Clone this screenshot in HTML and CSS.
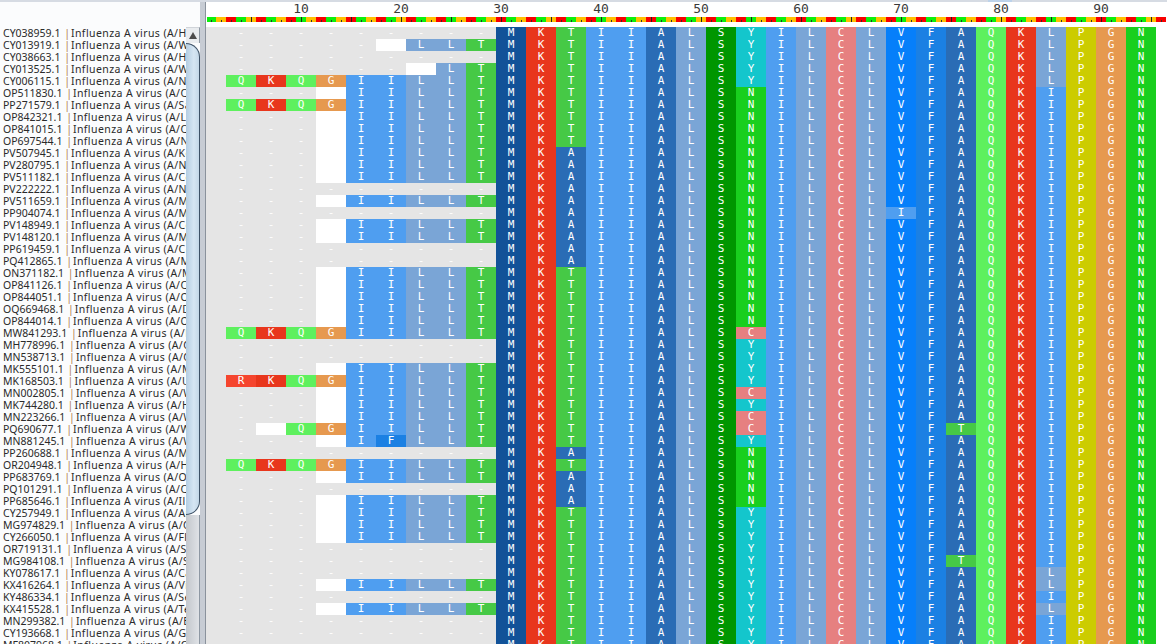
FILE: index.html

```html
<!DOCTYPE html>
<html lang="en">
<head>
  <meta charset="UTF-8">
  <title>Alignment viewer</title>
  <link rel="stylesheet" href="styles.css">
</head>
<body>
  <div class="top-sliver"></div>
  <div class="viewer">
    <!-- Sequence names -->
    <div class="names" id="names"></div>

    <div class="name-scrollbar">
      <div class="scroll-button"><span class="scroll-arrow"></span></div>
      <div class="scroll-thumb"></div>
      <div class="scroll-track"></div>
    </div>

    <div class="splitter"></div>

    <!-- Ruler and alignment -->
    <div class="alignment">
      <div class="ruler">
        <div class="ruler-labels" id="rulerLabels"></div>
        <div class="ruler-bar"></div>
      </div>
      <div class="rows" id="rows"></div>
    </div>
  </div>

  <script src="script.js"></script>
</body>
</html>
```

FILE: styles.css

```css
html,
body {
  margin: 0;
  height: 100%;
  overflow: hidden;
  background-color: white;
}

.top-sliver {
  position: absolute;
  top: 0;
  left: 988px;
  width: 24px;
  height: 2px;
  background-color: #bcd2ea;
}

.viewer {
  display: grid;
  grid-template-columns: 186px 14px 6px 1fr;
  height: 100%;
  box-sizing: border-box;
  border-top: 2px solid #d6dbe3;
}

/* Names */
.names {
  padding-top: 25px;
  overflow: hidden;
  background-color: #fbfcfd;
  color: #2a2a2a;
  font-family: "Noto Sans", sans-serif;
  font-size: 10.5px;
}

.name-row {
  display: flex;
  height: 12px;
  line-height: 12px;
  padding-left: 3px;
  white-space: pre;
}

.name-pipe {
  margin: 0 1px;
  color: #b0824f;
}

.name-desc {
  letter-spacing: 0.42px;
}

/* Scrollbar next to the names */
.name-scrollbar {
  display: flex;
  flex-direction: column;
  padding-top: 25px;
  background-color: #fbfcfd;
  overflow: hidden;
}

.scroll-button {
  display: flex;
  justify-content: center;
  flex: 0 0 16px;
  padding-top: 4px;
  box-sizing: border-box;
  background-color: #e9ecef;
  border-top: 1px solid #d0d4d9;
  border-right: 1px solid #8e98a3;
}

.scroll-arrow {
  width: 0;
  height: 0;
  border-left: 4px solid transparent;
  border-right: 4px solid transparent;
  border-bottom: 7px solid #4c4c4c;
}

.scroll-thumb {
  flex: 0 0 472px;
  box-sizing: border-box;
  border: 1.5px solid #3d5166;
  border-left: none;
  border-radius: 0 14px 14px 0;
  background: linear-gradient(90deg, #b4cde2, #d6e6f3 60%, #c4d8e8);
}

.scroll-track {
  flex: 1;
  background: linear-gradient(90deg, #c3c7cc, #dfe2e6);
  border-right: 1px solid #8e98a3;
}

.splitter {
  background-color: #c7ccd4;
  border-right: 1px solid #8a929c;
}

/* Ruler */
.alignment {
  overflow: hidden;
}

.ruler {
  height: 25px;
}

.ruler-labels {
  display: flex;
  height: 15px;
  padding-left: 45px;
  color: #3a3a3a;
  font-family: "DejaVu Sans Mono", monospace;
  font-size: 13px;
  line-height: 13px;
}

.ruler-label {
  flex: 0 0 100px;
  text-align: center;
}

.ruler-bar {
  height: 5px;
  margin-left: 1px;
  margin-right: 1px;
  background:
    repeating-linear-gradient(90deg, transparent 0 44px, #222 44px 45px, transparent 45px 50px) top / 100% 5px no-repeat,
    repeating-linear-gradient(90deg, transparent 0 4px, #333 4px 5px, transparent 5px 10px) bottom / 100% 2px no-repeat,
    repeating-linear-gradient(90deg, #0cf00c 0 9px, #ffc000 9px 19px, #f80000 19px 29px, #0cf00c 29px 30px);
}

/* Alignment cells */
.row {
  display: grid;
  grid-template-columns: 20px repeat(31, 30px);
  width: 950px;
  height: 12px;
  background-color: #e5e5e5;
  color: white;
  font-family: "DejaVu Sans Mono", monospace;
  font-size: 11px;
  line-height: 12px;
  text-align: center;
}

.cell {
  height: 12px;
}

.blank { background-color: white; }
.aa-M { background-color: #125298; }
.aa-K { background-color: #e8361c; }
.aa-T { background-color: #46c946; }
.aa-I { background-color: #4f9ef0; }
.aa-A { background-color: #2a6cb5; }
.aa-L { background-color: #7aa5d6; }
.aa-S { background-color: #009600; }
.aa-Y { background-color: #14c6cc; }
.aa-N { background-color: #19cf1e; }
.aa-C { background-color: #e68080; }
.aa-V { background-color: #067ffa; }
.aa-F { background-color: #1b80e3; }
.aa-Q { background-color: #5ef05e; }
.aa-P { background-color: #cccc00; }
.aa-G { background-color: #e6994f; }
.aa-R { background-color: #f5452e; }
```

FILE: script.js

```js
// id | strain prefix | sequence (space = empty cell)
const data = `CY038959.1|Ho|---------MKTIIALSYILCLVFAQKLPGN
CY013919.1|Wi|----- LLTMKTIIALSYILCLVFAQKLPGN
CY038663.1|Ho|---------MKTIIALSYILCLVFAQKLPGN
CY013525.1|Wi|------ LTMKTIIALSYILCLVFAQKLPGN
CY006115.1|Ne|QKQGIILLTMKTIIALSYILCLVFAQKLPGN
OP511830.1|Ca|--- IILLTMKTIIALSNILCLVFAQKIPGN
PP271579.1|Sa|QKQGIILLTMKTIIALSNILCLVFAQKIPGN
OP842321.1|Lo|--- IILLTMKTIIALSNILCLVFAQKIPGN
OP841015.1|Ca|--- IILLTMKTIIALSNILCLVFAQKIPGN
OP697544.1|Ne|--- IILLTMKTIIALSNILCLVFAQKIPGN
PV507945.1|Ke|--- IILLTMKAIIALSNILCLVFAQKIPGN
PV280795.1|Ne|--- IILLTMKAIIALSNILCLVFAQKIPGN
PV511182.1|Co|--- IILLTMKAIIALSNILCLVFAQKIPGN
PV222222.1|Ne|---------MKAIIALSNILCLVFAQKIPGN
PV511659.1|Mi|--- IILLTMKAIIALSNILCLVFAQKIPGN
PP904074.1|Mi|---------MKAIIALSNILCLIFAQKIPGN
PV148949.1|Co|--- IILLTMKAIIALSNILCLVFAQKIPGN
PV148120.1|Mi|--- IILLTMKAIIALSNILCLVFAQKIPGN
PP619459.1|Co|---------MKAIIALSNILCLVFAQKIPGN
PQ412865.1|Mi|---------MKAIIALSNILCLVFAQKIPGN
ON371182.1|Mi|--- IILLTMKTIIALSNILCLVFAQKIPGN
OP841126.1|Ca|--- IILLTMKTIIALSNILCLVFAQKIPGN
OP844051.1|Or|--- IILLTMKTIIALSNILCLVFAQKIPGN
OQ669468.1|De|--- IILLTMKTIIALSNILCLVFAQKIPGN
OP844014.1|Or|--- IILLTMKTIIALSNILCLVFAQKIPGN
MW841293.1|Ec|QKQGIILLTMKTIIALSCILCLVFAQKIPGN
MH778996.1|Ca|---------MKTIIALSYILCLVFAQKIPGN
MN538713.1|Ca|---------MKTIIALSYILCLVFAQKIPGN
MK555101.1|Mi|--- IILLTMKTIIALSYILCLVFAQKIPGN
MK168503.1|Ut|RKQGIILLTMKTIIALSYILCLVFAQKIPGN
MN002805.1|Wi|--- IILLTMKTIIALSCILCLVFAQKIPGN
MK744280.1|Ho|--- IILLTMKTIIALSYILCLVFAQKIPGN
MN223266.1|Wi|--- IILLTMKTIIALSCILCLVFAQKIPGN
PQ690677.1|Wi|- QGIILLTMKTIIALSCILCLVFTQKIPGN
MN881245.1|Wi|--- IFLLTMKTIIALSYILCLVFAQKIPGN
PP260688.1|Mi|---------MKAIIALSNILCLVFAQKIPGN
OR204948.1|Ho|QKQGIILLTMKTIIALSNILCLVFAQKIPGN
PP683769.1|Or|--- IILLTMKAIIALSNILCLVFAQKIPGN
PQ101291.1|Ca|---------MKAIIALSNILCLVFAQKIPGN
PP685646.1|Ill|--- IILLTMKAIIALSNILCLVFAQKIPGN
CY257949.1|An|--- IILLTMKTIIALSYILCLVFAQKIPGN
MG974829.1|Ca|--- IILLTMKTIIALSYILCLVFAQKIPGN
CY266050.1|Fl|--- IILLTMKTIIALSYILCLVFAQKIPGN
OR719131.1|Sa|---------MKTIIALSYILCLVFAQKIPGN
MG984108.1|Sa|---------MKTIIALSYILCLVFTQKIPGN
KY078617.1|Ca|---------MKTIIALSYILCLVFAQKLPGN
KX416264.1|Vi|--- IILLTMKTIIALSYILCLVFAQKLPGN
KY486334.1|Se|---------MKTIIALSYILCLVFAQKIPGN
KX415528.1|Te|--- IILLTMKTIIALSYILCLVFAQKLPGN
MN299382.1|Ec|---------MKTIIALSYILCLVFAQKIPGN
CY193668.1|Ge|---------MKTIIALSYILCLVFAQKIPGN
MF807968.1|Ca|---------MKTIIALSYILCLVFAQKIPGN`;

const names = document.getElementById("names");
const rows = document.getElementById("rows");
const rulerLabels = document.getElementById("rulerLabels");

function addPart(parent, className, text) {
  const part = document.createElement("div");
  part.className = className;
  part.textContent = text;
  parent.appendChild(part);
}

for (let n = 10; n <= 90; n += 10) {
  const label = document.createElement("div");
  label.className = "ruler-label";
  label.textContent = n;
  rulerLabels.appendChild(label);
}

data.split("\n").forEach((line) => {
  const [id, strain, seq] = line.split("|");

  const nameRow = document.createElement("div");
  nameRow.className = "name-row";
  addPart(nameRow, "name-id", id + " ");
  addPart(nameRow, "name-pipe", "|");
  addPart(nameRow, "name-desc", "Influenza A virus (A/" + strain);
  names.appendChild(nameRow);

  const row = document.createElement("div");
  row.className = "row";
  row.appendChild(document.createElement("div")); // 2 bases before the first codon

  for (const ch of seq) {
    const cell = document.createElement("div");
    cell.className = "cell";
    if (ch === " ") {
      cell.classList.add("blank");
    } else {
      cell.textContent = ch;
      if (ch !== "-") cell.classList.add("aa-" + ch);
    }
    row.appendChild(cell);
  }
  rows.appendChild(row);
});
```
